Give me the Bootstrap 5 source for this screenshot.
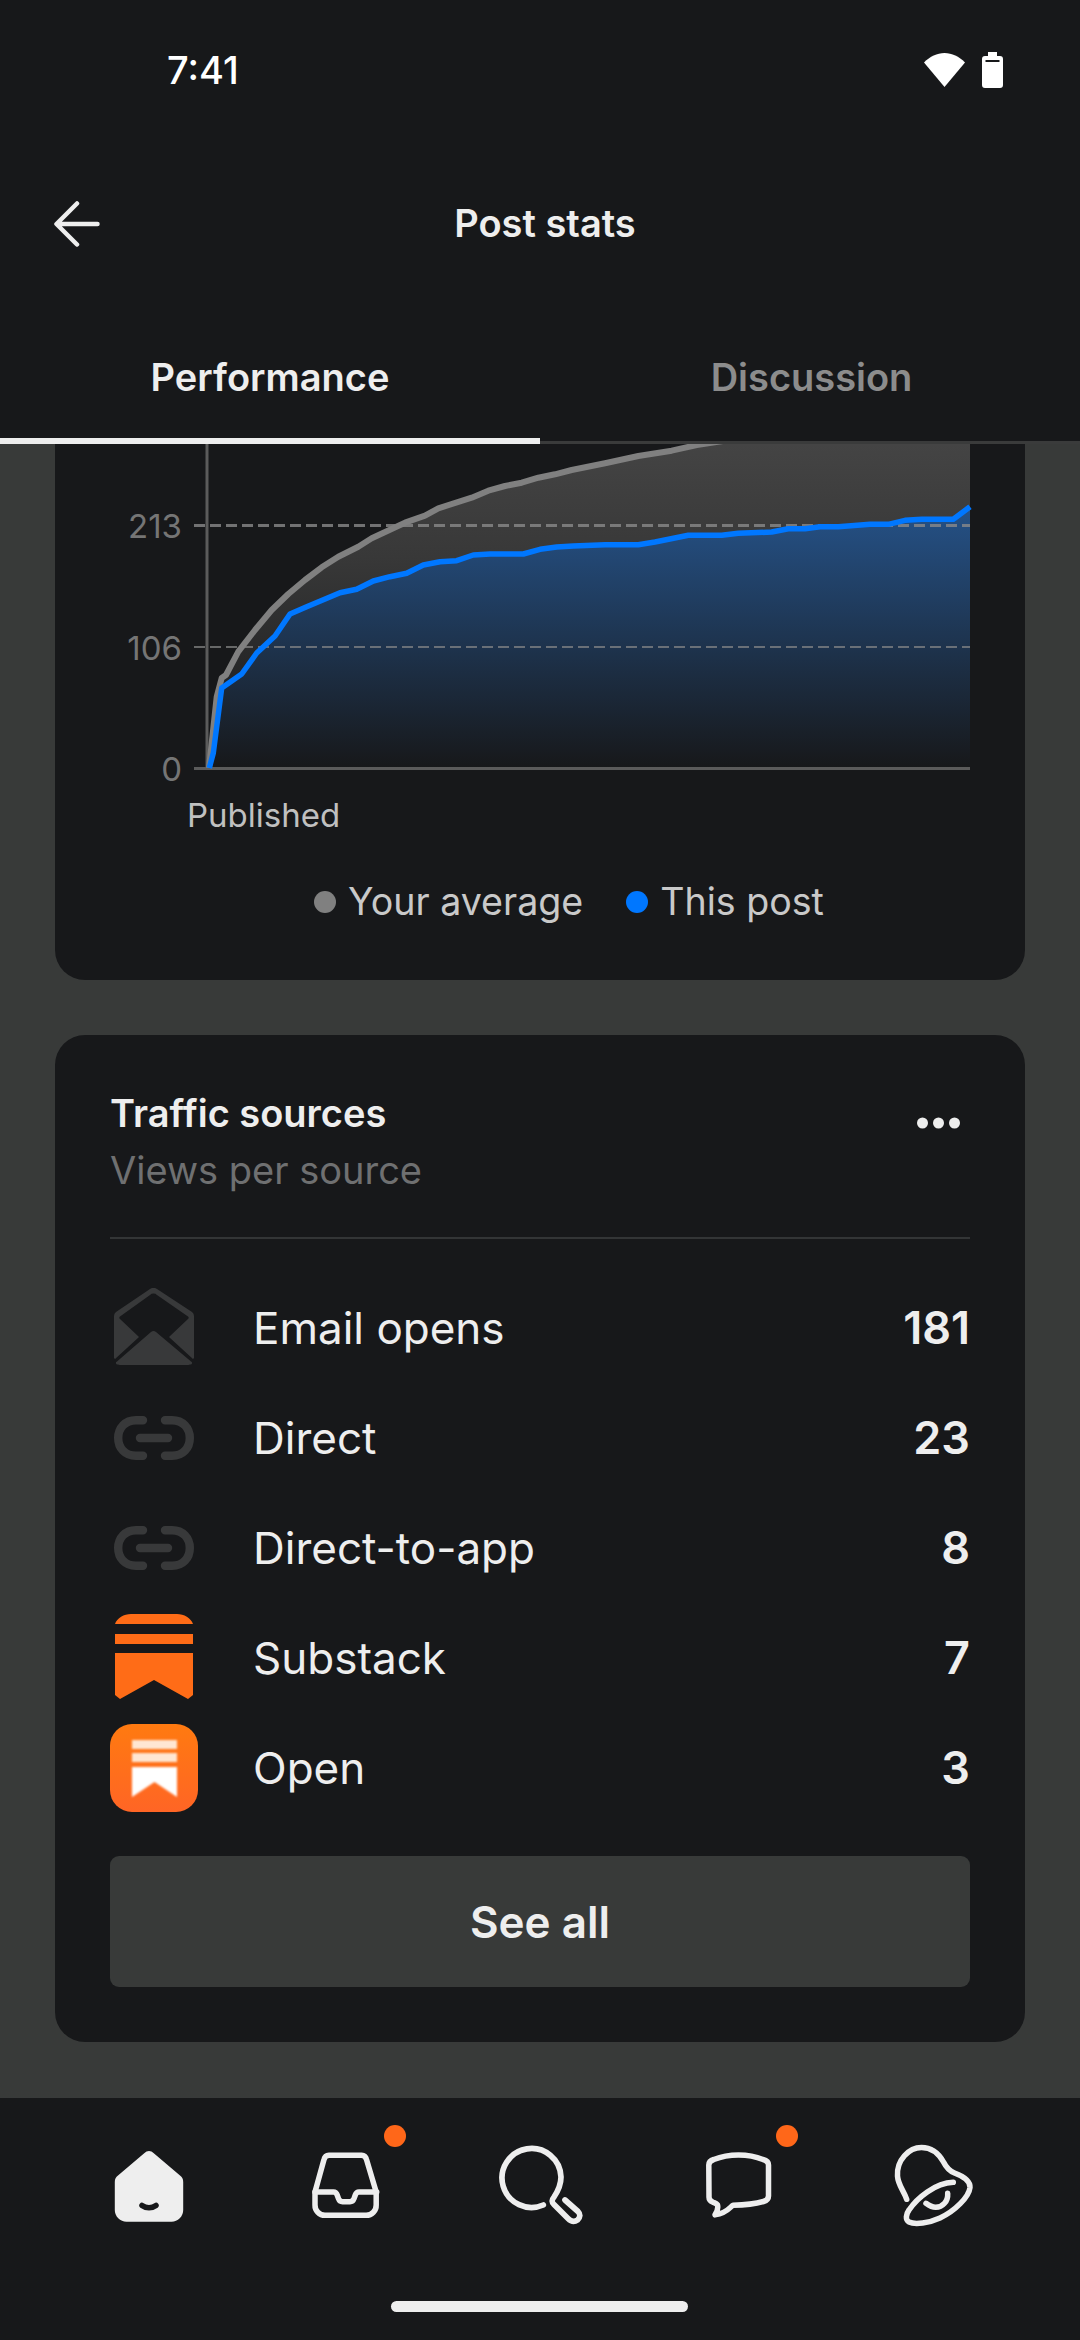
<!DOCTYPE html>
<html lang="en">
<head>
  <meta charset="UTF-8" />
  <title>Post stats</title>
  <link href="https://cdn.jsdelivr.net/npm/bootstrap@5.3.3/dist/css/bootstrap.min.css" rel="stylesheet">
  <style>
    body { width: 1080px; height: 2340px; background: #383a39; font-family: Inter, "Liberation Sans", sans-serif; color: #eee; overflow: hidden; }
    .app-top { background: #17181a; height: 444px; flex: none; }
    .status-row { height: 145px; padding: 0 77px 5px 167px; }
    .status-time { font-size: 38px; font-weight: 500; color: #fff; }
    .status-icons { gap: 17px; }
    .title-row { height: 157px; }
    .title-text { font-size: 38px; font-weight: 600; margin-left: 10px; }
    .back-btn { left: 54px; top: 50%; transform: translateY(-50%); display: block; }
    .tab-row { height: 142px; border-bottom: 3px solid #3a3b3b; }
    .tab-item { width: 540px; height: 139px; font-size: 38px; font-weight: 600; padding-top: 11px; }
    .tab-item.on { color: #eee; border-bottom: 6px solid #eee; height: 142px; padding-top: 14px; }
    .tab-item.off { color: #8c8c8c; padding-left: 3px; }
    .stats-area { padding: 0 55px; gap: 55px; }
    .chart-box { background: #17181a; height: 536px; border-radius: 0 0 30px 30px; overflow: hidden; }
    .chart-svg { display: block; }
    .chart-svg text { font-family: Inter, "Liberation Sans", sans-serif; }
    .legend-row { gap: 43px; font-size: 37.6px; color: #c9c9c9; margin-top: 30px; padding-left: 58px; }
    .legend-dot { width: 22px; height: 22px; border-radius: 50%; margin-right: 12px; }
    .legend-gray { background: #808080; }
    .legend-blue { background: #0077ff; }
    .src-box { background: #17181a; height: 1007px; border-radius: 30px; padding: 55px; }
    .src-title { font-size: 38px; font-weight: 600; line-height: 46px; color: #eee; }
    .src-sub { font-size: 38px; line-height: 46px; margin-top: 11px; color: #6f7071; }
    .src-head { height: 149px; border-bottom: 2px solid #333536; flex: none; }
    .more-dots { margin: 23px 10px 0 0; }
    .src-row { height: 110px; }
    .src-list { padding-top: 34px; }
    .src-ico { width: 143px; flex: none; }
    .src-ico-link { margin-left: 4px; }
    .src-ico-mark { margin-left: 5px; }
    .src-ico-up { margin-bottom: 4px; }
    .src-name { font-size: 44px; color: #eee; }
    .src-val { font-size: 45px; font-weight: 600; color: #eee; }
    .see-btn { height: 131px; background: #383a39; border: 0; border-radius: 9px; color: #eee; font-size: 44px; font-weight: 600; margin-top: 33px; }
    .see-btn:hover { background: #383a39; color: #eee; }
    .bottom-nav { background: #17181a; height: 242px; flex: none; padding: 47px 0 0 108.500px; gap: 116.500px; }
    .nav-slot { width: 80px; height: 80px; }
    .nav-slot svg { display: block; overflow: visible; }
    .nav-dot { width: 22px; height: 22px; border-radius: 50%; background: #ff6719; top: -20px; }
    .nav-dot-inbox { left: 79px; }
    .nav-dot-chat { left: 78px; }
    .home-bar { width: 297px; height: 11px; background: #eee; border-radius: 6px; left: 391px; bottom: 28px; }
  </style>
</head>
<body class="d-flex flex-column">

  <div class="app-top">
    <div class="status-row d-flex justify-content-between align-items-center">
      <span class="status-time">7:41</span>
      <span class="status-icons d-flex align-items-center">
        <svg class="d-block" width="41" height="34" viewBox="0 0 41 34"><path d="M0 9.500C6 3.500 13 0 20.500 0S35 3.500 41 9.500L20.500 34z" fill="#fff"/></svg>
        <svg class="d-block" width="21" height="36" viewBox="0 0 21 36"><path d="M6 0h9v4h3a3 3 0 0 1 3 3v26a3 3 0 0 1-3 3H3a3 3 0 0 1-3-3V7a3 3 0 0 1 3-3h3z" fill="#fff"/><rect x="3.500" y="8" width="14" height="2" fill="#17181a"/></svg>
      </span>
    </div>
    <div class="title-row position-relative d-flex justify-content-center align-items-center">
      <svg class="back-btn position-absolute" width="46" height="46" viewBox="0 0 46 46" fill="none" stroke="#eee" stroke-width="4.500" stroke-linecap="round" stroke-linejoin="round"><path d="M23 2.500 2.500 23 23 43.500M3 23h40.500"/></svg>
      <span class="title-text">Post stats</span>
    </div>
    <div class="tab-row d-flex">
      <div class="tab-item on d-flex justify-content-center align-items-center">Performance</div>
      <div class="tab-item off d-flex justify-content-center align-items-center">Discussion</div>
    </div>
  </div>

  <div class="stats-area flex-grow-1 d-flex flex-column">
    <div class="chart-box">
      <!-- viewBox is page coords, card corner is at (55,444) -->
      <svg class="chart-svg" width="970" height="400" viewBox="55 444 970 400">
        <defs>
          <linearGradient id="grayFill" gradientUnits="userSpaceOnUse" x1="0" y1="444" x2="0" y2="768">
            <stop offset="0" stop-color="#444"/><stop offset="0.35" stop-color="#383838"/><stop offset="1" stop-color="#17181a"/>
          </linearGradient>
          <linearGradient id="blueFill" gradientUnits="userSpaceOnUse" x1="0" y1="506" x2="0" y2="768">
            <stop offset="0" stop-color="#255288"/><stop offset="1" stop-color="#17181a"/>
          </linearGradient>
        </defs>
        <path fill="url(#grayFill)" d="M209 768 216.700 696.700 221.700 678 226 675 238.300 651.700 255 630 271.700 610 288.300 594 305 580 321.700 567.300 338.300 556.700 358.300 546.700 371.700 538.300 405 522.700 425 515.700 438.300 508.300 471.700 497.700 488.300 490.700 505 486 521.700 482.700 538.300 477.700 555 474.300 571.700 470 605 463.300 638.300 456 671.700 450.700 696.700 445 723 441 970 405V768z"/>
        <path fill="url(#blueFill)" d="M209.300 768 213.300 753 221.700 688 241.700 674 256.700 653 275 636 290 614 306.700 606.700 340 592.700 356.700 589.300 373.300 581 390 576.700 406.700 573.300 423.300 565 440 561.700 456.700 560.700 473.300 555 490 554 523.300 554 540 549.300 556.700 547 573.300 546 605 544.700 638.300 544.700 655 542 688.300 535.300 721.700 535.300 738.300 533.300 771.700 532 788.300 528.700 805 528.700 820 526.700 838.300 526.700 870 524.300 888.300 524.300 905 520.300 921.700 519.300 953.300 519.300 970 506.700V768z"/>
        <path d="M194 525.500H970" stroke="#8a8a8a" stroke-opacity=".8" stroke-width="3" stroke-dasharray="11 5" fill="none"/>
        <path d="M194 647H970" stroke="#8a8a8a" stroke-opacity=".7" stroke-width="2" stroke-dasharray="11 5" fill="none"/>
        <path d="M207 444V768M194 768.500H970" stroke="#5b5b5b" stroke-width="3" fill="none"/>
        <path fill="none" stroke="#808080" stroke-width="6" stroke-linejoin="round" d="M209 768 216.700 696.700 221.700 678 226 675 238.300 651.700 255 630 271.700 610 288.300 594 305 580 321.700 567.300 338.300 556.700 358.300 546.700 371.700 538.300 405 522.700 425 515.700 438.300 508.300 471.700 497.700 488.300 490.700 505 486 521.700 482.700 538.300 477.700 555 474.300 571.700 470 605 463.300 638.300 456 671.700 450.700 696.700 445 723 441"/>
        <path fill="none" stroke="#0077ff" stroke-width="5.500" stroke-linejoin="round" d="M209.300 768 213.300 753 221.700 688 241.700 674 256.700 653 275 636 290 614 306.700 606.700 340 592.700 356.700 589.300 373.300 581 390 576.700 406.700 573.300 423.300 565 440 561.700 456.700 560.700 473.300 555 490 554 523.300 554 540 549.300 556.700 547 573.300 546 605 544.700 638.300 544.700 655 542 688.300 535.300 721.700 535.300 738.300 533.300 771.700 532 788.300 528.700 805 528.700 820 526.700 838.300 526.700 870 524.300 888.300 524.300 905 520.300 921.700 519.300 953.300 519.300 970 506.700"/>
        <g fill="#757575" font-size="33" text-anchor="end">
          <text x="182" y="538">213</text>
          <text x="182" y="660">106</text>
          <text x="182" y="781">0</text>
        </g>
        <text x="187" y="827" font-size="33" fill="#c0c0c0">Published</text>
      </svg>
      <div class="legend-row d-flex justify-content-center">
        <span class="d-flex align-items-center"><span class="legend-dot legend-gray"></span>Your average</span>
        <span class="d-flex align-items-center"><span class="legend-dot legend-blue"></span>This post</span>
      </div>
    </div>

    <div class="src-box d-flex flex-column">
      <div class="src-head d-flex justify-content-between">
        <div>
          <div class="src-title">Traffic sources</div>
          <div class="src-sub">Views per source</div>
        </div>
        <svg class="more-dots" width="43" height="20" viewBox="0 0 43 20" fill="#eee"><circle cx="5.500" cy="10" r="5.500"/><circle cx="21.500" cy="10" r="5.500"/><circle cx="37.500" cy="10" r="5.500"/></svg>
      </div>
      <div class="src-list">
        <div class="src-row d-flex align-items-center">
          <div class="src-ico">
            <svg class="d-block src-ico-link src-ico-up" width="80" height="77" viewBox="0 0 80 77" fill="#38393a"><path d="M36 1a6 6 0 0 1 7 0L78 24a5 5 0 0 1 2 4V70l-1 1L55 49 74 31a1.500 1.500 0 0 0 0-2.500L43 7a5 5 0 0 0-7 0L6 28.500a1.500 1.500 0 0 0 0 2.500L25 49 1 71l-1-1V28a5 5 0 0 1 2-4z"/><path d="M37 44a4 4 0 0 1 5 0L77 73.500a1.500 1.500 0 0 1-1 3c-1 .5-2 .5-3 .5H7c-1 0-2 0-3-.5a1.500 1.500 0 0 1-1-3z"/></svg>
          </div>
          <span class="src-name flex-grow-1">Email opens</span><span class="src-val">181</span>
        </div>
        <div class="src-row d-flex align-items-center">
          <div class="src-ico">
            <svg class="d-block src-ico-link" width="80" height="44" viewBox="0 0 80 44" fill="none" stroke="#38393a" stroke-width="8.400" stroke-linecap="round"><path d="M29 4.200H22C11 4.200 4.200 12 4.200 22S11 39.800 22 39.800h7M51 4.200h7c11 0 17.800 7.800 17.800 17.800S69 39.800 58 39.800h-7M26 22h28"/></svg>
          </div>
          <span class="src-name flex-grow-1">Direct</span><span class="src-val">23</span>
        </div>
        <div class="src-row d-flex align-items-center">
          <div class="src-ico">
            <svg class="d-block src-ico-link" width="80" height="44" viewBox="0 0 80 44" fill="none" stroke="#38393a" stroke-width="8.400" stroke-linecap="round"><path d="M29 4.200H22C11 4.200 4.200 12 4.200 22S11 39.800 22 39.800h7M51 4.200h7c11 0 17.800 7.800 17.800 17.800S69 39.800 58 39.800h-7M26 22h28"/></svg>
          </div>
          <span class="src-name flex-grow-1">Direct-to-app</span><span class="src-val">8</span>
        </div>
        <div class="src-row d-flex align-items-center">
          <div class="src-ico">
            <svg class="d-block src-ico-mark src-ico-up" width="78" height="85" viewBox="0 0 78 85" fill="#ff6c17"><path d="M0 10C2 4 9 0 16 0h46c7 0 14 4 16 10zM0 20h78v10H0zM0 39h78v42l-5 4-34-19L5 85l-5-4z"/></svg>
          </div>
          <span class="src-name flex-grow-1">Substack</span><span class="src-val">7</span>
        </div>
        <div class="src-row d-flex align-items-center">
          <div class="src-ico">
            <svg class="d-block" width="88" height="88" viewBox="0 0 88 88"><defs><linearGradient id="openGrad" x1="0" y1="0" x2="0" y2="1"><stop offset="0" stop-color="#ff7a10"/><stop offset="1" stop-color="#ff6525"/></linearGradient><filter id="softEdge"><feGaussianBlur stdDeviation=".8"/></filter></defs><rect width="88" height="88" rx="22" fill="url(#openGrad)"/><g filter="url(#softEdge)"><path d="M22 16h45v9H22zM22 29h45v9H22z" fill="#ffe6d2"/><path d="M22 43h45v30L44.500 58 22 73z" fill="#fff"/></g></svg>
          </div>
          <span class="src-name flex-grow-1">Open</span><span class="src-val">3</span>
        </div>
      </div>
      <button class="btn see-btn w-100" type="button">See all</button>
    </div>
  </div>

  <div class="bottom-nav position-relative d-flex">
    <div class="nav-slot position-relative">
      <svg width="80" height="80" viewBox="0 0 80 80"><path d="M35.500 8a6 6 0 0 1 9 0L71 30.500a8 8 0 0 1 3.200 6.500V65a11.700 11.700 0 0 1-11.700 11.700H17.500A11.700 11.700 0 0 1 5.800 65V37a8 8 0 0 1 3.200-6.500z" fill="#eee"/><path d="M33 60.500c4 3 10 3 14 0" fill="none" stroke="#17181a" stroke-width="5.500" stroke-linecap="round"/></svg>
    </div>
    <div class="nav-slot position-relative">
      <svg width="80" height="80" viewBox="0 0 80 80" fill="none" stroke="#eee" stroke-width="5.500" stroke-linecap="round" stroke-linejoin="round"><path d="M10 47 19 14.500a5.500 5.500 0 0 1 5-4.200h32.500a5.500 5.500 0 0 1 5 4.200l9.700 32.500V60a10 10 0 0 1-10 10.300H20A10 10 0 0 1 10 60z"/><path d="M10 47h18.500c2 0 3 1 3.700 3l1.300 3.700c.7 2 2 3 4 3h7.500c2 0 3.300-1 4-3l1.300-3.700c.7-2 1.700-3 3.700-3H71.700"/></svg>
      <span class="nav-dot nav-dot-inbox position-absolute"></span>
    </div>
    <div class="nav-slot position-relative">
      <svg width="80" height="80" viewBox="0 0 80 80" fill="none" stroke="#eee" stroke-width="5.700" stroke-linecap="round" stroke-linejoin="round"><path d="M41.300 60A29.500 29.500 0 1 1 59 32c0 8-3 14-7 20-2.500 3-2.500 5 0 7.500L66 73.500c3 3 6 4 9.500 1.500 3-2.500 3-6 .5-8.500L63 55"/></svg>
    </div>
    <div class="nav-slot position-relative">
      <svg width="80" height="80" viewBox="0 0 80 80" fill="none" stroke="#eee" stroke-width="5.500" stroke-linecap="round" stroke-linejoin="round"><path d="M10.800 20c0-3 1.500-4.500 5-5.500C22 12 31 10 40.500 10s18.500 2 24.500 4.500c4 1 5.500 2.500 5.500 5.500v31c0 3-1.500 4.500-5 5.500-8 2.300-19 3.500-30.500 3.700-3 2-6 8-18 9.700 2-3 3.500-6 2.500-10-1-1.500-3-2-4.500-2.700-3-1.300-4-2.500-4-5z"/></svg>
      <span class="nav-dot nav-dot-chat position-absolute"></span>
    </div>
    <div class="nav-slot position-relative">
      <svg width="80" height="80" viewBox="0 0 80 80" fill="none" stroke="#eee" stroke-width="5.500" stroke-linecap="round" stroke-linejoin="round"><path d="M11.700 54.300C9 46 3 40 2.500 31 1.500 15 14 2.500 26.500 2.500 37 2.500 44 9 48.500 17c3 6 6 9 11 11 8 3 16 7 15.500 14.500C74 52 60 66 45 73c-11 5-25 7-31 4-4-2-3-8 0-12C22 53 40 38 58.300 37.300"/><path d="M52.700 48.300c.5 8-5 14-12 14-4 0-7-2-9.700-4"/></svg>
    </div>
    <div class="home-bar position-absolute"></div>
  </div>

</body>
</html>
